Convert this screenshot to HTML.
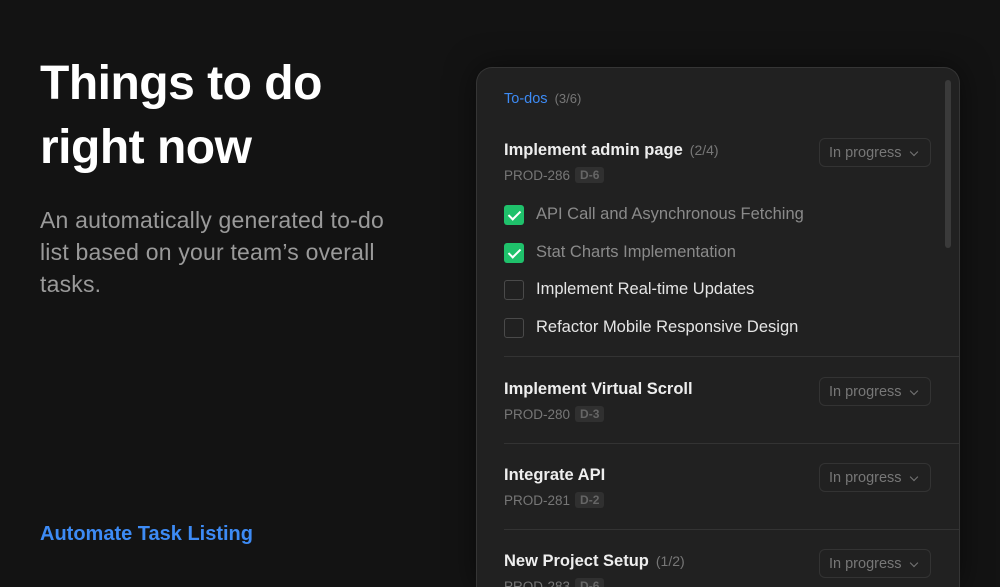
<!DOCTYPE html>
<html><head><style>
*{margin:0;padding:0;box-sizing:border-box}
html,body{width:1000px;height:587px;overflow:hidden}
body{background:#131313;font-family:"Liberation Sans",sans-serif;position:relative}
.a{position:absolute;white-space:nowrap}
h1{position:absolute;left:40px;top:52px;color:#fff;font-size:48px;line-height:64px;font-weight:bold;letter-spacing:-0.5px}
.sub{position:absolute;left:40px;top:204px;width:372px;color:#9a9a9a;font-size:23px;line-height:32px;letter-spacing:0.2px}
.link{left:40px;top:523px;color:#3d8bf5;font-size:20px;font-weight:bold}
.card{position:absolute;left:476px;top:67px;width:484px;height:520px;background:#212121;border:1px solid #353535;border-bottom:none;border-radius:16px 16px 0 0;box-shadow:0 0 30px rgba(0,0,0,.5);overflow:hidden}
.t{font-size:16.5px;font-weight:bold;color:#eee}
.cnt{font-size:14px;color:#777;font-weight:normal;margin-left:7px}
.id{font-size:13.5px;color:#777}
.tag{display:inline-block;background:#303030;color:#666;font-size:12px;font-weight:bold;padding:1px 5px;border-radius:3px;margin-left:5px;vertical-align:1px}
.sel{position:absolute;left:342px;width:112px;height:29px;border:1px solid #333;border-radius:6px;color:#777;font-size:14.5px;line-height:28px;padding-left:9px}
.sel:after{content:"";position:absolute;right:13px;top:10px;width:5px;height:5px;border-right:1.3px solid #777;border-bottom:1.3px solid #777;transform:rotate(45deg)}
.cb{position:absolute;left:27px;width:20px;height:20px;border-radius:3px}
.on{background:#1fc16b}
.on:after{content:"";position:absolute;left:7px;top:3px;width:5px;height:10px;border-right:2px solid #fff;border-bottom:2px solid #fff;transform:rotate(45deg)}
.off{border:1.5px solid #4a4a4a}
.lb{font-size:16.5px;left:59px}
.hr{position:absolute;left:27px;right:0;height:1px;background:#333}
</style></head><body>
<h1>Things to do<br>right now</h1>
<div class="sub">An automatically generated to-do list based on your team’s overall tasks.</div>
<div class="a link">Automate Task Listing</div>
<div class="card">
<div class="a" style="left:27px;top:23px;font-size:14.5px;color:#3d8bf5">To-dos <span style="color:#777;font-size:13px;margin-left:3px">(3/6)</span></div>
<div style="position:absolute;right:8px;top:12px;width:6px;height:168px;background:#3a3a3a;border-radius:3px"></div>

<div class="a t" style="left:27px;top:73px">Implement admin page<span class="cnt">(2/4)</span></div>
<div class="a id" style="left:27px;top:99px">PROD-286<span class="tag">D-6</span></div>
<div class="sel" style="top:70px">In progress</div>
<div class="cb on" style="top:137px"></div><div class="a lb" style="top:137px;color:#8a8a8a">API Call and Asynchronous Fetching</div>
<div class="cb on" style="top:175px"></div><div class="a lb" style="top:175px;color:#8a8a8a">Stat Charts Implementation</div>
<div class="cb off" style="top:212px"></div><div class="a lb" style="top:212px;color:#e5e5e5">Implement Real-time Updates</div>
<div class="cb off" style="top:250px"></div><div class="a lb" style="top:250px;color:#e5e5e5">Refactor Mobile Responsive Design</div>
<div class="hr" style="top:288px"></div>

<div class="a t" style="left:27px;top:312px">Implement Virtual Scroll</div>
<div class="a id" style="left:27px;top:338px">PROD-280<span class="tag">D-3</span></div>
<div class="sel" style="top:309px">In progress</div>
<div class="hr" style="top:375px"></div>

<div class="a t" style="left:27px;top:398px">Integrate API</div>
<div class="a id" style="left:27px;top:424px">PROD-281<span class="tag">D-2</span></div>
<div class="sel" style="top:395px">In progress</div>
<div class="hr" style="top:461px"></div>

<div class="a t" style="left:27px;top:484px">New Project Setup<span class="cnt">(1/2)</span></div>
<div class="a id" style="left:27px;top:510px">PROD-283<span class="tag">D-6</span></div>
<div class="sel" style="top:481px">In progress</div>
</div>
</body></html>
